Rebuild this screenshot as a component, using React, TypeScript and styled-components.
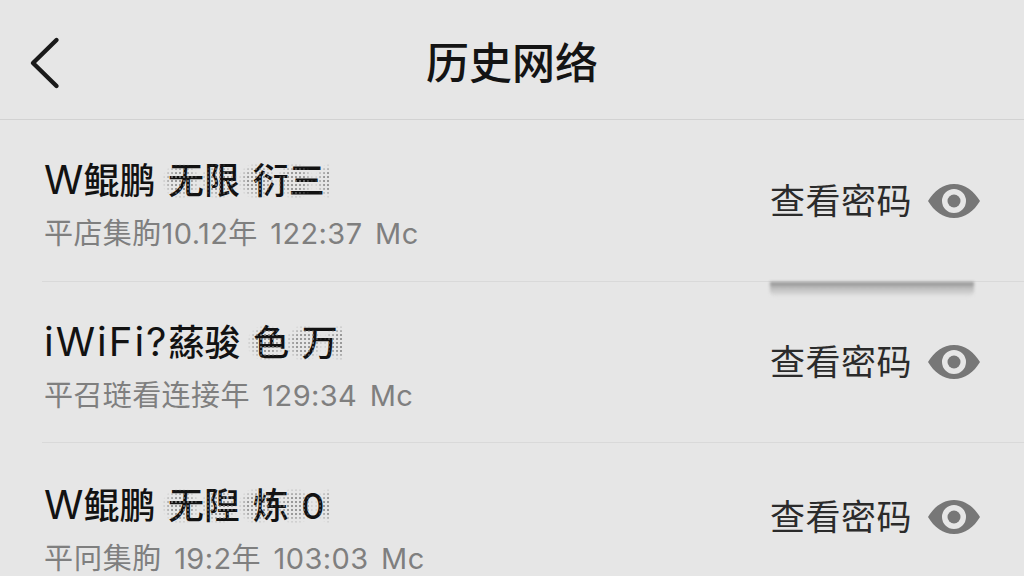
import React from 'react'
import styled, { createGlobalStyle } from 'styled-components'

const GlobalStyle = createGlobalStyle`
  html, body {
    margin: 0;
    padding: 0;
    background: #e6e6e6;
    overflow: hidden;
  }
  body {
    font-family: Inter, "Noto Sans CJK SC", sans-serif;
  }
`

const Page = styled.div`
  width: 1024px;
  height: 576px;
  overflow: hidden;
  background: #e6e6e6;
`

const Header = styled.header`
  height: 119px;
  display: flex;
  align-items: center;
  justify-content: center;
  position: relative;
  border-bottom: 1px solid #d2d2d2;
`

const BackButton = styled.button`
  position: absolute;
  left: 27px;
  top: 34px;
  width: 40px;
  height: 58px;
  padding: 0;
  border: none;
  background: none;
  svg {
    display: block;
  }
`

const Title = styled.h1`
  margin: 0;
  font-size: 43px;
  font-weight: 500;
  line-height: 1;
  color: #141414;
  font-family: "Noto Sans CJK SC", sans-serif;
  position: relative;
  top: 1px;
`

const List = styled.div`
  display: flex;
  flex-direction: column;
`

const Row = styled.div<{ $height: number; $raised?: boolean }>`
  height: ${(p) => p.$height}px;
  flex: none;
  margin-left: 42px;
  padding-right: 44px;
  display: flex;
  align-items: center;
  justify-content: space-between;
  position: relative;
  border-bottom: 1px solid #d9d9d9;

  ${(p) =>
    p.$raised &&
    `
    &::after {
      content: '';
      position: absolute;
      left: 728px;
      width: 204px;
      top: calc(100% + 1px);
      height: 15px;
      background: linear-gradient(#888888, #b8b8b8 35%, rgba(230, 230, 230, 0));
      border-radius: 0 0 6px 6px;
      filter: blur(1.5px);
    }
  `}
`

const Info = styled.div<{ $top: number }>`
  display: flex;
  flex-direction: column;
  gap: 13px;
  padding-left: 2px;
  padding-top: ${(p) => p.$top}px;
`

const Name = styled.div`
  font-size: 36px;
  line-height: 44px;
  font-weight: 500;
  color: #121212;
  white-space: nowrap;
  word-spacing: 3px;
`

const Latin = styled.span<{ $tracking?: number }>`
  font-size: 40px;
  font-weight: 400;
  letter-spacing: ${(p) => p.$tracking ?? 0}px;
`

const Speckled = styled.span`
  position: relative;
  &::after {
    content: '';
    position: absolute;
    inset: 4px -6px 4px -6px;
    background-image: radial-gradient(circle, #808080 0.9px, transparent 1.2px);
    background-size: 4px 4px;
    mask-image: radial-gradient(ellipse at center, #000 35%, transparent 72%);
    mask-size: 38px 100%;
    opacity: 0.75;
  }
`

const Meta = styled.div`
  font-size: 29px;
  line-height: 36px;
  color: #7f7f7f;
  white-space: nowrap;
  letter-spacing: 0.4px;
  word-spacing: 4px;
`

const Reveal = styled.div<{ $lift?: number }>`
  display: flex;
  align-items: center;
  gap: 16px;
  margin-bottom: ${(p) => p.$lift ?? 0}px;
`

const RevealLabel = styled.span`
  font-size: 35px;
  line-height: 44px;
  letter-spacing: 0.5px;
  padding-bottom: 4px;
  color: #2b2b2b;
  font-family: "Noto Sans CJK SC", sans-serif;
`

const EyeIcon = () => (
  <svg width="52" height="34" viewBox="0 0 52 34">
    <path
      fill="#777777"
      fillRule="evenodd"
      d="M0 17C6 7 15 0 26 0s20 7 26 17c-6 10-15 17-26 17S6 27 0 17zM26 5a12 12 0 1 0 0 24 12 12 0 0 0 0-24z"
    />
    <circle cx="26" cy="17" r="6.5" fill="#777777" />
  </svg>
)

const rows = [
  { latin: 'W', name: '鲲鹏 ', noisy: '无限 衍三', meta: '平店集朐10.12年 122:37 Mc', height: 161, top: 8, lift: 0, raised: true },
  { latin: 'iWiFi?', tracking: 2, name: '蕬骏 ', noisy: '色 万', meta: '平召琏看连接年 129:34 Mc', height: 160, top: 10, lift: 0 },
  { latin: 'W', name: '鲲鹏 ', noisy: '无隉 炼 0', meta: '平冋集朐 19:2年 103:03 Mc', height: 161, top: 12, lift: 14 },
]

export default function App() {
  return (
    <Page>
      <GlobalStyle />
      <Header>
        <BackButton aria-label="返回">
          <svg width="40" height="58" viewBox="0 0 40 58">
            <path
              d="M29.5 6 L6 29 L29.5 52"
              fill="none"
              stroke="#1a1a1a"
              strokeWidth="4.4"
              strokeLinecap="round"
              strokeLinejoin="round"
            />
          </svg>
        </BackButton>
        <Title>历史网络</Title>
      </Header>
      <List>
        {rows.map((row) => (
          <Row key={row.meta} $height={row.height} $raised={row.raised}>
            <Info $top={row.top}>
              <Name>
                <Latin $tracking={row.tracking}>{row.latin}</Latin>
                {row.name}
                <Speckled>{row.noisy}</Speckled>
              </Name>
              <Meta>{row.meta}</Meta>
            </Info>
            <Reveal $lift={row.lift}>
              <RevealLabel>查看密码</RevealLabel>
              <EyeIcon />
            </Reveal>
          </Row>
        ))}
      </List>
    </Page>
  )
}
